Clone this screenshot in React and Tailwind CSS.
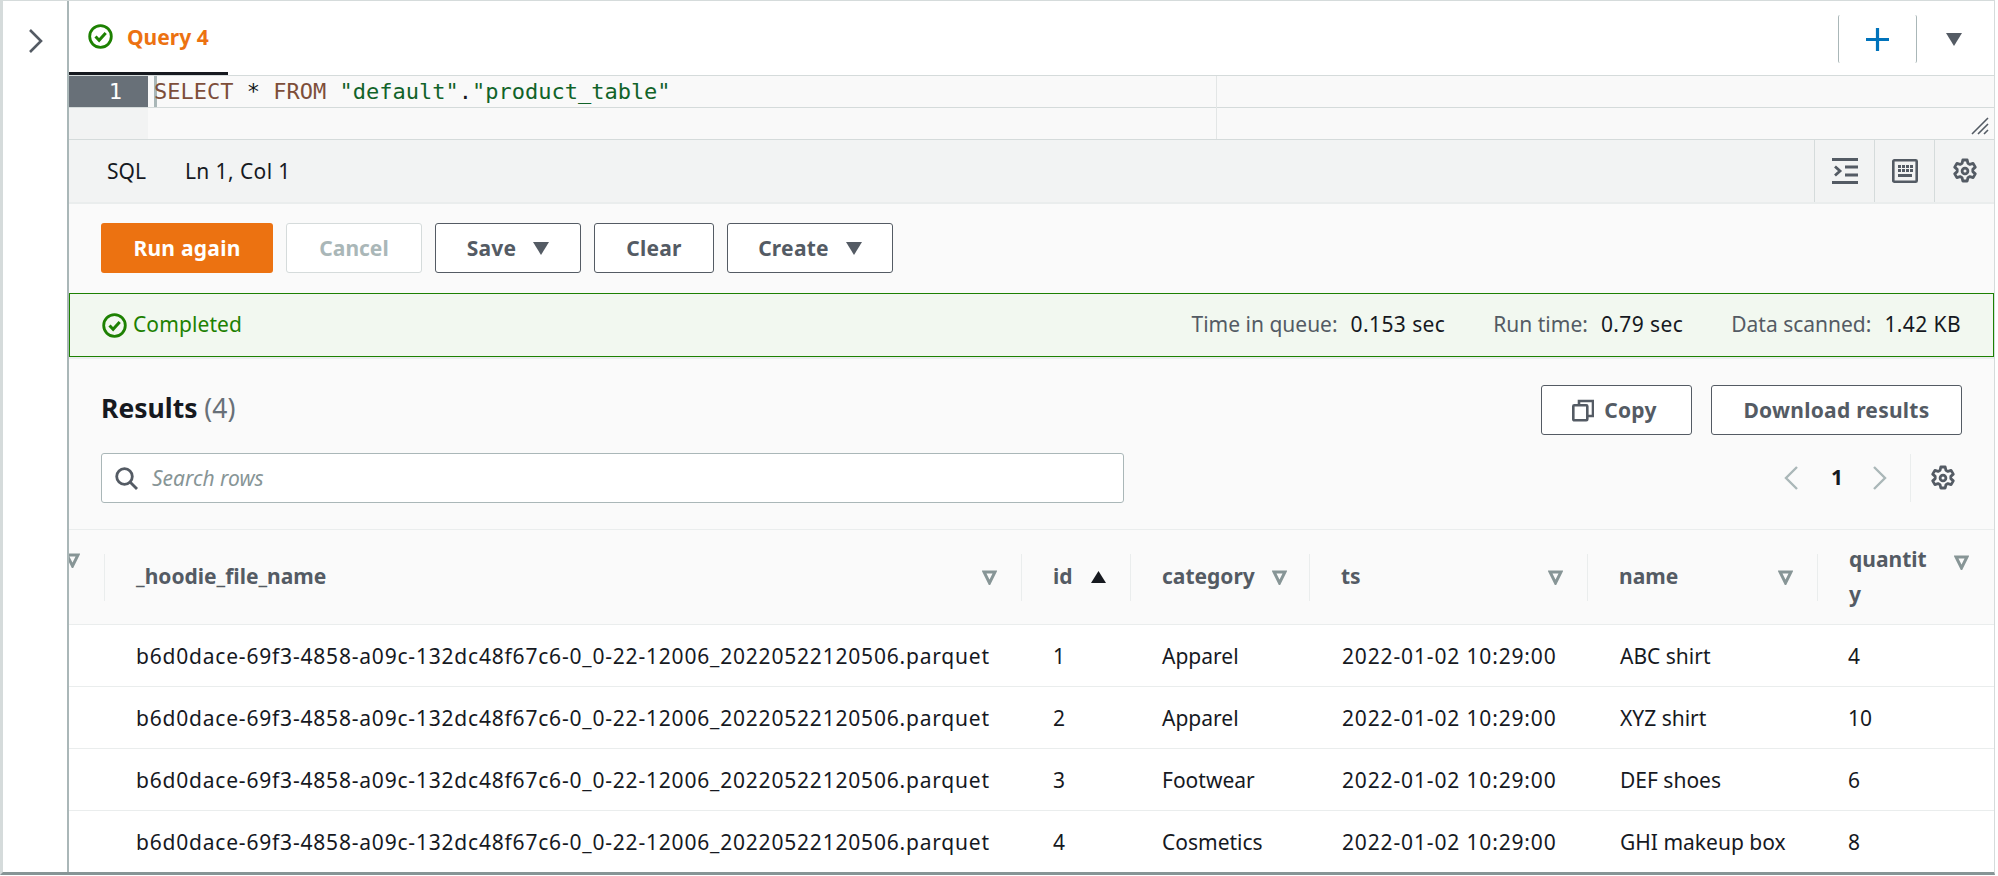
import React from "react";

const rows = [
  ["1", "Apparel", "ABC shirt", "4"],
  ["2", "Apparel", "XYZ shirt", "10"],
  ["3", "Footwear", "DEF shoes", "6"],
  ["4", "Cosmetics", "GHI makeup box", "8"],
];

const fileName = "b6d0dace-69f3-4858-a09c-132dc48f67c6-0_0-22-12006_20220522120506.parquet";

const CheckCircle = ({ className }) => (
  <svg className={className} viewBox="0 0 25 25" fill="none" stroke="#1d8102" strokeWidth="2.8">
    <circle cx="12.5" cy="12.5" r="10.8" />
    <path d="M7.5 12.5l3.6 3.8 6.6-7.4" strokeWidth="3" />
  </svg>
);

const Caret = ({ className }) => (
  <svg className={className} viewBox="0 0 16 13" fill="#545b64">
    <path d="M0 0h16l-8 13z" />
  </svg>
);

const FilterIcon = ({ className }) => (
  <svg className={className} viewBox="0 0 15 15" fill="none" stroke="#879596" strokeWidth="3">
    <path d="M2 2h11L7.500 13z" />
  </svg>
);

const Gear = ({ className }) => (
  <svg className={className} viewBox="0 0 26 26" fill="none" stroke="#545b64" strokeWidth="2.8">
    <path d="M10.8 2h4.4l.7 3.3 2 1.1 3.2-1 2.2 3.7-2.5 2.3v2.2l2.5 2.3-2.2 3.7-3.2-1-2 1.1-.7 3.3h-4.4l-.7-3.3-2-1.1-3.2 1-2.2-3.7 2.5-2.3v-2.2L2.700 9.100l2.200-3.700 3.200 1 2-1.100z" strokeLinejoin="round" />
    <circle cx="13" cy="13" r="2.900" />
  </svg>
);

const Button = ({ children, className = "" }) => (
  <button className={`h-[50px] pt-[2px] rounded-[3px] border border-[#545b64] bg-white text-[21px] tracking-[0.25px] font-bold text-[#545b64] flex items-center justify-center ${className}`}>
    {children}
  </button>
);

const Metric = ({ label, value }) => (
  <div className="flex gap-[13px]">
    <span className="text-[#545b64]">{label}</span>
    <span className="text-[#16191f] tracking-[0.4px]">{value}</span>
  </div>
);

const HeaderCell = ({ label, gap = "justify-between", pad = "pr-[24px]", icon, wrap }) => (
  <th className="p-0 font-bold text-left align-middle">
    <div className={`h-[47px] border-l border-[#eaeded] pl-[31px] flex items-center ${gap} ${pad}`}>
      <span className={wrap ? "w-[82px] break-all text-[#545b64] leading-[35px]" : "text-[#545b64]"}>{label}</span>
      {icon || <FilterIcon className={wrap ? "w-[15px] h-[15px] self-start mt-[1px]" : "w-[15px] h-[15px] shrink-0"} />}
    </div>
  </th>
);

export default function App() {
  return (
    <div className="w-[1998px] h-[876px] overflow-hidden bg-white font-['Noto_Sans',sans-serif] text-[#16191f] text-[21px]">
      <div className="w-[1995px] h-[875px] flex border-t border-l-[3px] border-b-[3px] border-r border-[#d5dbdb] border-b-[#879596] overflow-hidden">
        {/* collapsed side panel */}
        <div className="w-[66px] shrink-0 bg-white border-r-2 border-[#aab7b8] pt-[27px] pl-[25px]">
          <svg className="w-[16px] h-[26px]" viewBox="0 0 16 26" fill="none" stroke="#545b64" strokeWidth="2.6">
            <path d="M2 2l11 11L2 24" />
          </svg>
        </div>

        <div className="flex-1 min-w-0 flex flex-col bg-[#fafafa]">
          {/* tabs */}
          <div className="h-[75px] shrink-0 bg-white border-b border-[#d5dbdb] flex items-start relative">
            <div className="w-[159px] h-[74px] border-b-[3px] border-[#16191f] flex items-center pl-[19px] gap-[14px]">
              <CheckCircle className="w-[25px] h-[25px]" />
              <span className="font-bold text-[#ec7211] pt-[2px]">Query 4</span>
            </div>
            <div className="ml-auto flex items-center h-[48px] mt-[14px]">
              <div className="w-[79px] h-[48px] border-x border-[#aab7b8] flex items-center justify-center rounded-[2px]">
                <svg className="w-[23px] h-[23px]" viewBox="0 0 23 23" stroke="#0073bb" strokeWidth="3.200">
                  <path d="M11.500 0v23M0 11.500h23" />
                </svg>
              </div>
              <div className="w-[77px] pr-[4px] flex justify-center">
                <Caret className="w-[16px] h-[13px]" />
              </div>
            </div>
          </div>

          {/* editor */}
          <div className="h-[64px] shrink-0 bg-[#f9f9f9] border-b border-[#d5dbdb] relative">
            <div className="h-[32px] flex border-b border-[#d5dbdb] relative">
              <div className="w-[79px] h-[31px] bg-[#687078] text-white text-right pr-[26px] font-['DejaVu_Sans_Mono',monospace] text-[22px] leading-[31px]">1</div>
              <div className="absolute left-[85px] top-0 h-[31px] w-[3px] bg-[#aab7b8]" />
              <div className="pl-[6px] font-['DejaVu_Sans_Mono',monospace] text-[22px] leading-[31px] whitespace-pre relative">
                <span className="text-[#7d4e3a]">SELECT</span>
                <span> * </span>
                <span className="text-[#7d4e3a]">FROM</span>
                <span> </span>
                <span className="text-[#116329]">"default"</span>
                <span>.</span>
                <span className="text-[#116329]">"product_table"</span>
              </div>
              <div className="absolute left-[1147px] top-0 bottom-[-32px] w-px bg-[#e3e6e6]" />
            </div>
            <div className="absolute left-0 bottom-0 h-[31px] w-[79px] bg-[#f2f3f3]" />
            <svg className="absolute right-[5px] bottom-[4px] w-[18px] h-[18px]" viewBox="0 0 18 18" stroke="#545b64" strokeWidth="1.600">
              <path d="M1 17L17 1M7 17L17 7M13 17l4-4" />
            </svg>
          </div>

          {/* status bar */}
          <div className="h-[64px] shrink-0 bg-[#f2f3f3] border-b-2 border-[#eaeded] flex items-center">
            <span className="ml-[38px] pt-[2px]">SQL</span>
            <span className="ml-[39px] pt-[2px] tracking-[0.4px]">Ln 1, Col 1</span>
            <div className="ml-auto flex h-full">
              <div className="w-[60px] border-l border-[#d5dbdb] flex items-center justify-center">
                <svg className="w-[26px] h-[26px]" viewBox="0 0 26 26" fill="none" stroke="#545b64" strokeWidth="2.800">
                  <path d="M0 1.500h26M0 24.500h26M13 9h13M13 17h13M3 8.500l5 4.500-5 4.500" />
                </svg>
              </div>
              <div className="w-[60px] border-l border-[#d5dbdb] flex items-center justify-center">
                <svg className="w-[26px] h-[24px]" viewBox="0 0 26 24" fill="none">
                  <rect x="1.300" y="1.300" width="23.400" height="21.400" rx="1" stroke="#545b64" strokeWidth="2.600" />
                  <path d="M6 6h3v3H6zM10 6h3v3h-3zM14 6h3v3h-3zM18 6h3v3h-3zM6 10h3v3H6zM10 10h3v3h-3zM14 10h3v3h-3zM18 10h3v3h-3zM6 15h14v3H6z" fill="#545b64" />
                </svg>
              </div>
              <div className="w-[60px] border-l border-[#d5dbdb] flex items-center justify-center">
                <Gear className="w-[26px] h-[26px]" />
              </div>
            </div>
          </div>

          {/* actions */}
          <div className="flex gap-[13px] pl-[32px] pt-[19px] h-[89px] shrink-0">
            <button className="w-[172px] h-[50px] pt-[2px] rounded-[3px] bg-[#ec7211] text-white font-bold tracking-[0.25px]">Run again</button>
            <button className="w-[136px] h-[50px] pt-[2px] rounded-[3px] border border-[#d5dbdb] bg-white text-[#aab7b8] font-bold">Cancel</button>
            <Button className="w-[146px] gap-[17px]">Save <Caret className="w-[16px] h-[13px] -mt-[2px]" /></Button>
            <Button className="w-[120px]">Clear</Button>
            <Button className="w-[166px] gap-[17px]">Create <Caret className="w-[16px] h-[13px] -mt-[2px]" /></Button>
          </div>

          {/* run info */}
          <div className="h-[64px] shrink-0 border border-[#1d8102] bg-[#f2f8f0] flex items-center pl-[32px] pr-[32px]">
            <CheckCircle className="w-[25px] h-[25px]" />
            <span className="ml-[6px] text-[#1d8102] tracking-[0.1px]">Completed</span>
            <div className="ml-auto flex gap-[48px]">
              <Metric label="Time in queue:" value="0.153 sec" />
              <Metric label="Run time:" value="0.79 sec" />
              <Metric label="Data scanned:" value="1.42 KB" />
            </div>
          </div>

          {/* results header */}
          <div className="h-[172px] shrink-0 border-t-2 border-[#eaeded] px-[32px] pt-[26px] relative">
            <div className="flex items-start justify-between h-[50px]">
              <div className="text-[26.500px] font-bold leading-[50px] -mt-[2px]">
                Results <span className="font-normal text-[#687078]">(4)</span>
              </div>
              <div className="flex gap-[19px]">
                <Button className="w-[151px] gap-[10px]">
                  <svg className="w-[22px] h-[23px] -ml-[4px] -mt-[2px]" viewBox="0 0 22 23" fill="none" stroke="#545b64" strokeWidth="2.600">
                    <path d="M7 6V2h14v15h-5" />
                    <rect x="1.300" y="6.300" width="14" height="15" rx="1" />
                  </svg>
                  Copy
                </Button>
                <Button className="w-[251px]">Download results</Button>
              </div>
            </div>
            <div className="flex items-center mt-[18px]">
              <div className="w-[1023px] h-[50px] rounded-[3px] border border-[#aab7b8] bg-white flex items-center pl-[13px] gap-[14px]">
                <svg className="w-[23px] h-[23px]" viewBox="0 0 23 23" fill="none" stroke="#545b64" strokeWidth="2.800">
                  <circle cx="9.500" cy="9.500" r="7.800" />
                  <path d="M15 15l7 7" />
                </svg>
                <span className="italic text-[#879596] pt-[2px]">Search rows</span>
              </div>
              <div className="ml-auto flex items-center h-[50px] pr-[6px]">
                <svg className="w-[16px] h-[26px]" viewBox="0 0 16 26" fill="none" stroke="#aab7b8" strokeWidth="2.400">
                  <path d="M14 2L3 13l11 11" />
                </svg>
                <span className="ml-[32px] mr-[29px] font-bold">1</span>
                <svg className="w-[16px] h-[26px]" viewBox="0 0 16 26" fill="none" stroke="#aab7b8" strokeWidth="2.400">
                  <path d="M2 2l11 11L2 24" />
                </svg>
                <div className="ml-[22px] h-[48px] border-l border-[#eaeded] pl-[19px] flex items-center">
                  <Gear className="w-[26px] h-[26px]" />
                </div>
              </div>
            </div>
          </div>

          {/* table */}
          <table className="table-fixed w-[1925px] border-collapse">
            <colgroup>
              <col className="w-[35px]" />
              <col className="w-[917px]" />
              <col className="w-[109px]" />
              <col className="w-[179px]" />
              <col className="w-[278px]" />
              <col className="w-[230px]" />
              <col className="w-[177px]" />
            </colgroup>
            <thead>
              <tr className="h-[95px] border-t border-b border-[#eaeded] bg-[#fafafa]">
                <th className="p-0 align-top overflow-hidden">
                  <FilterIcon className="w-[15px] h-[15px] mt-[23px] ml-[-4px]" />
                </th>
                <HeaderCell label="_hoodie_file_name" />
                <HeaderCell
                  label="id"
                  gap="justify-start gap-[18px]"
                  pad=""
                  icon={
                    <svg className="w-[15px] h-[12px]" viewBox="0 0 15 12" fill="#16191f">
                      <path d="M7.500 0L15 12H0z" />
                    </svg>
                  }
                />
                <HeaderCell label="category" pad="pr-[22px]" />
                <HeaderCell label="ts" />
                <HeaderCell label="name" />
                <HeaderCell label="quantity" wrap pad="pr-[25px]" />
              </tr>
            </thead>
            <tbody className="bg-white">
              {rows.map(([id, category, name, quantity]) => (
                <tr key={id} className="h-[62px] border-b border-[#eaeded] last:border-b-0">
                  <td />
                  <td className="pl-[32px] pt-[2px] whitespace-nowrap overflow-hidden tracking-[0.8px]">{fileName}</td>
                  <td className="pl-[32px] pt-[2px]">{id}</td>
                  <td className="pl-[32px] pt-[2px]">{category}</td>
                  <td className="pl-[33px] pt-[2px] whitespace-nowrap tracking-[0.85px]">2022-01-02 10:29:00</td>
                  <td className="pl-[33px] pt-[2px]">{name}</td>
                  <td className="pl-[31px] pt-[2px]">{quantity}</td>
                </tr>
              ))}
            </tbody>
          </table>
        </div>
      </div>
    </div>
  );
}
